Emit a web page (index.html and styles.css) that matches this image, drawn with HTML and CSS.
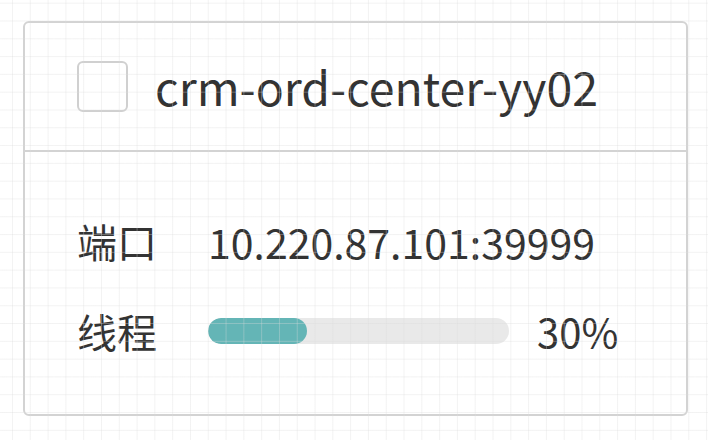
FILE: index.html
```html
<!DOCTYPE html>
<html lang="en">
<head>
    <meta charset="UTF-8">
    <meta name="viewport" content="width=device-width, initial-scale=1.0">
    <title>Service card</title>
    <link rel="stylesheet" href="styles.css">
</head>
<body>
    <div class="service-card">
        <div class="card-header">
            <span class="check-box"></span>
            <span class="service-name">crm-ord-center-yy02</span>
        </div>
        <div class="card-body">
            <div class="info-row">
                <span class="info-label">端口</span>
                <span class="info-value">10.220.87.101:39999</span>
            </div>
            <div class="info-row">
                <span class="info-label">线程</span>
                <div class="thread-bar">
                    <div class="bar-track">
                        <div class="bar-fill" style="width: 33%"></div>
                    </div>
                    <span class="bar-percent">30%</span>
                </div>
            </div>
        </div>
    </div>
    <div class="grid-overlay"></div>
</body>
</html>
```

FILE: styles.css
```css
body {
    margin: 0;
    background: #fff;
    font-family: "Noto Sans CJK SC", "Noto Sans", sans-serif;
    color: #333;
}
.grid-overlay {
    position: fixed;
    inset: 0;
    pointer-events: none;
    background-image:
        linear-gradient(to right, rgba(220, 220, 220, 0.35) 1px, transparent 1px),
        linear-gradient(to bottom, rgba(220, 220, 220, 0.35) 1px, transparent 1px);
    background-size: 17.8px 17.8px;
    background-position: 12px 2.7px;
}
.service-card {
    margin: 21px 0 0 23px;
    width: 665px;
    height: 395px;
    box-sizing: border-box;
    border: 2px solid #d3d3d3;
    border-radius: 6px;
    display: flex;
    flex-direction: column;
}
.card-header {
    height: 127px;
    display: flex;
    align-items: center;
    gap: 27px;
    padding-left: 52px;
    border-bottom: 2px solid #d3d3d3;
}
.check-box {
    width: 51px;
    height: 51px;
    box-sizing: border-box;
    border: 2px solid #d0d0d0;
    border-radius: 6px;
}
.service-name {
    font-size: 46.4px;
    line-height: 1;
}
.card-body {
    padding: 59px 0 0 52px;
    display: flex;
    flex-direction: column;
    gap: 30px;
}
.info-row {
    height: 60px;
    display: flex;
    align-items: center;
    font-size: 40px;
}
.info-label {
    width: 131px;
}
.info-value {
    font-size: 41px;
}
.thread-bar {
    display: flex;
    align-items: center;
    gap: 28px;
}
.bar-track {
    width: 301px;
    height: 26px;
    border-radius: 13px;
    background: #e9e9e9;
    overflow: hidden;
}
.bar-fill {
    height: 100%;
    border-radius: 13px;
    background: #64b5b6;
}
```
